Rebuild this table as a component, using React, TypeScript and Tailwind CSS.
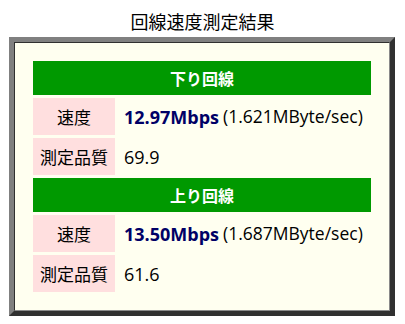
import React from "react";

type Line = {
  title: string;
  mbps: string;
  mbyte: string;
  quality: string;
};

const lines: Line[] = [
  { title: "下り回線", mbps: "12.97Mbps", mbyte: "(1.621MByte/sec)", quality: "69.9" },
  { title: "上り回線", mbps: "13.50Mbps", mbyte: "(1.687MByte/sec)", quality: "61.6" },
];

const font = { fontFamily: '"Noto Sans CJK JP", "Noto Sans", sans-serif' };
const latin = { fontFamily: '"Open Sans", "Noto Sans CJK JP", sans-serif' };

function Section({ line }: { line: Line }) {
  return (
    <>
      <div className="col-span-2 h-[34px] bg-[#009900] flex items-center justify-center text-white font-bold text-[16px] leading-none">
        {line.title}
      </div>
      <div className="h-[37px] bg-[#ffdfdf] flex items-center justify-center text-[17px] text-black leading-none">
        速度
      </div>
      <div
        className="h-[37px] flex items-center pl-[6px] text-black leading-none whitespace-nowrap"
        style={latin}
      >
        <span className="font-bold text-[18px] text-[#000066]">{line.mbps}</span>
        <span className="text-[17.5px] ml-[4px]">{line.mbyte}</span>
      </div>
      <div className="h-[37px] bg-[#ffdfdf] flex items-center justify-center text-[17px] text-black leading-none">
        測定品質
      </div>
      <div
        className="h-[37px] flex items-center pl-[6px] text-[18px] text-black leading-none"
        style={latin}
      >
        {line.quality}
      </div>
    </>
  );
}

export default function App() {
  return (
    <div className="w-[405px] h-[324px] bg-white" style={font}>
      <div className="h-[37px] pt-[9px] text-center text-[18px] leading-[24px] text-black">
        回線速度測定結果
      </div>
      <div className="ml-[9px] w-[386px] h-[279px] border-[5px] border-t-[#808080] border-l-[#808080] border-r-[#303030] border-b-[#303030]">
        <div className="h-full border border-t-[#303030] border-l-[#303030] border-r-[#8a8a8a] border-b-[#8a8a8a] bg-[#fffff0] p-[18px]">
          <div className="grid grid-cols-[82px_1fr] gap-[3px]">
            {lines.map((l) => (
              <Section key={l.title} line={l} />
            ))}
          </div>
        </div>
      </div>
    </div>
  );
}
